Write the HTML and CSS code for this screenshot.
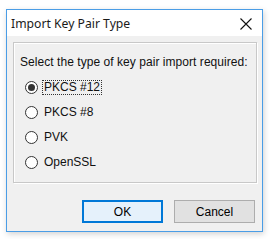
FILE: index.html
```html
<!DOCTYPE html>
<html>
<head>
<meta charset="utf-8">
<link rel="stylesheet" href="styles.css">
</head>
<body>
<div class="window">
  <div class="titlebar">
    <span class="title">Import Key Pair Type</span>
    <svg class="close" width="12" height="12" viewBox="0 0 12 12"><path d="M0.5 0.5 L11.5 11.5 M11.5 0.5 L0.5 11.5" stroke="#111" stroke-width="1.1" fill="none"/></svg>
  </div>
  <div class="content">
    <div class="group">
      <div class="prompt">Select the type of key pair import required:</div>
      <div class="options">
        <div class="option"><span class="radio checked"></span><span class="label focus">PKCS #12</span></div>
        <div class="option"><span class="radio"></span><span class="label">PKCS #8</span></div>
        <div class="option"><span class="radio"></span><span class="label">PVK</span></div>
        <div class="option"><span class="radio"></span><span class="label">OpenSSL</span></div>
      </div>
    </div>
    <div class="buttons">
      <button class="btn default">OK</button>
      <button class="btn">Cancel</button>
    </div>
  </div>
</div>
</body>
</html>
```
FILE: styles.css
```css
html, body {
  margin: 0;
  padding: 0;
  background: #ffffff;
}
body {
  width: 272px;
  height: 239px;
  overflow: hidden;
  padding-top: 9px;
  box-sizing: border-box;
}
.window {
  margin-left: 6px;
  width: 257px;
  height: 223px;
  box-sizing: border-box;
  border: 1px solid #4a9de6;
  background: #f0f0f0;
  box-shadow: 1px 2px 6px rgba(0,0,0,0.18);
  display: flex;
  flex-direction: column;
}
.titlebar {
  height: 26px;
  background: #ffffff;
  display: flex;
  align-items: center;
  justify-content: space-between;
  padding-left: 4px;
  padding-right: 10px;
  flex-shrink: 0;
}
.title {
  font-family: "Noto Sans", "Open Sans", sans-serif;
  font-size: 12.2px;
  color: #1a1a1a;
  padding-top: 1px;
}
.close {
  display: block;
  margin-top: 1px;
}
.content {
  flex: 1;
  padding: 6px 5px 0 6px;
  display: flex;
  flex-direction: column;
  font-family: "Liberation Sans", sans-serif;
  font-size: 12px;
  color: #000;
}
.group {
  height: 141px;
  box-sizing: border-box;
  border: 1px solid #c8c8c8;
  box-shadow: inset 1px 1px 0 #ffffff, 1px 1px 0 #ffffff;
  padding: 13px 0 0 6px;
}
.prompt {
  font-family: "Liberation Sans", sans-serif;
  font-size: 12px;
  line-height: 13px;
  letter-spacing: 0.05px;
  color: #111;
}
.options {
  margin-top: 12px;
  display: flex;
  flex-direction: column;
  gap: 12px;
  padding-left: 5px;
}
.option {
  display: flex;
  align-items: center;
  height: 13px;
}
.radio {
  width: 13px;
  height: 13px;
  box-sizing: border-box;
  border: 1px solid #333333;
  border-radius: 50%;
  background: #ffffff;
  display: flex;
  align-items: center;
  justify-content: center;
  flex-shrink: 0;
}
.radio.checked::after {
  content: "";
  width: 7px;
  height: 7px;
  border-radius: 50%;
  background: #333333;
}
.label {
  font-family: "Liberation Sans", sans-serif;
  font-size: 12px;
  line-height: 13px;
  margin-left: 4px;
  padding: 0 1px;
  border: 1px dotted transparent;
  color: #111;
}
.label.focus {
  border-color: #333;
}
.buttons {
  display: flex;
  justify-content: flex-end;
  gap: 11px;
  margin-top: 17px;
  padding-right: 2px;
}
.btn {
  width: 81px;
  height: 23px;
  box-sizing: border-box;
  border: 1px solid #adadad;
  background: #e1e1e1;
  font-family: "Liberation Sans", sans-serif;
  font-size: 12px;
  color: #000;
  padding: 0;
  margin: 0;
}
.btn.default {
  border: 2px solid #0078d7;
  background: #e5f1fb;
}
```
